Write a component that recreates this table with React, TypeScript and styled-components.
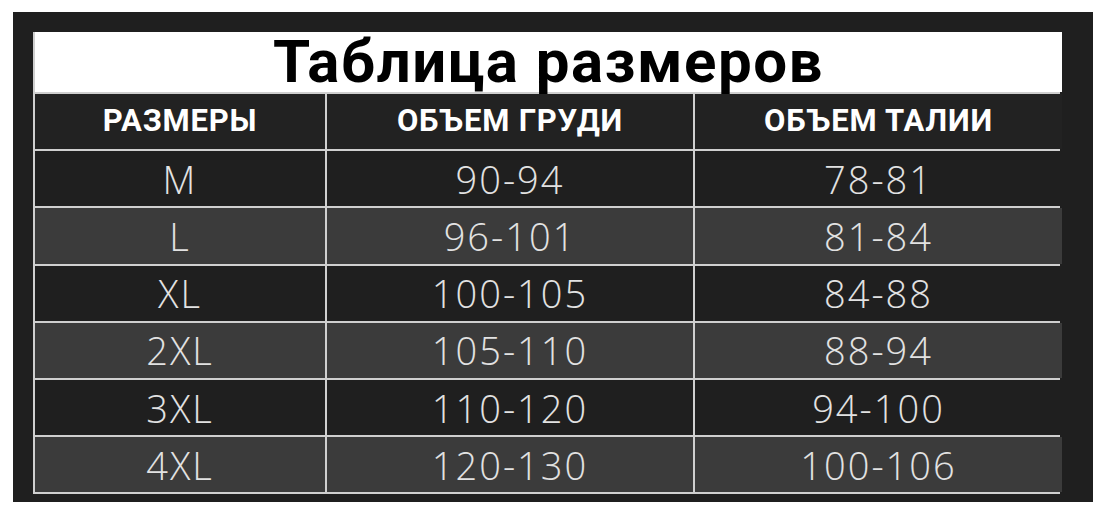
import React from "react";
import styled, { createGlobalStyle } from "styled-components";

const Global = createGlobalStyle`
  html, body {
    margin: 0;
    padding: 0;
    background: #ffffff;
  }
`;

const Page = styled.div`
  padding: 12px 12px 13px 13px;
`;

const Frame = styled.div`
  width: 1080px;
  box-sizing: border-box;
  background: #1f1f1f;
  padding: 20px 33px 8px 20px;
`;

const Grid = styled.div`
  display: grid;
  grid-template-columns: 290px 366px 367px;
  grid-template-rows: 60px repeat(7, 55.2px);
  gap: 2px;
  background: #cfcfcf;
  border: 2px solid #cfcfcf;
  border-top: none;
`;

const Title = styled.div`
  grid-column: 1 / -1;
  background: #ffffff;
  display: flex;
  align-items: center;
  justify-content: center;
  font-family: Roboto, "Liberation Sans", sans-serif;
  font-weight: 700;
  font-size: 60px;
  color: #000;
  letter-spacing: 1.5px;
  padding-bottom: 2px;
`;

const Head = styled.div`
  background: #222222;
  display: flex;
  align-items: center;
  justify-content: center;
  font-family: Roboto, "Liberation Sans", sans-serif;
  font-weight: 700;
  font-size: 31px;
  letter-spacing: 0.8px;
  color: #ffffff;
  padding-bottom: 2px;
`;

const Cell = styled.div<{ $alt: boolean }>`
  background: ${(p) => (p.$alt ? "#3b3b3b" : "#1f1f1f")};
  display: flex;
  align-items: center;
  justify-content: center;
  font-family: "Open Sans", "Noto Sans", sans-serif;
  font-weight: 300;
  font-size: 38px;
  letter-spacing: 2px;
  color: #e2e2e2;
`;

const rows = [
  ["M", "90-94", "78-81"],
  ["L", "96-101", "81-84"],
  ["XL", "100-105", "84-88"],
  ["2XL", "105-110", "88-94"],
  ["3XL", "110-120", "94-100"],
  ["4XL", "120-130", "100-106"],
];

export default function App() {
  return (
    <Page>
      <Global />
      <Frame>
        <Grid>
          <Title>Таблица размеров</Title>
          <Head>РАЗМЕРЫ</Head>
          <Head>ОБЪЕМ ГРУДИ</Head>
          <Head>ОБЪЕМ ТАЛИИ</Head>
          {rows.map((r, i) =>
            r.map((v, j) => (
              <Cell key={`${i}-${j}`} $alt={i % 2 === 1}>
                {v}
              </Cell>
            ))
          )}
        </Grid>
      </Frame>
    </Page>
  );
}
